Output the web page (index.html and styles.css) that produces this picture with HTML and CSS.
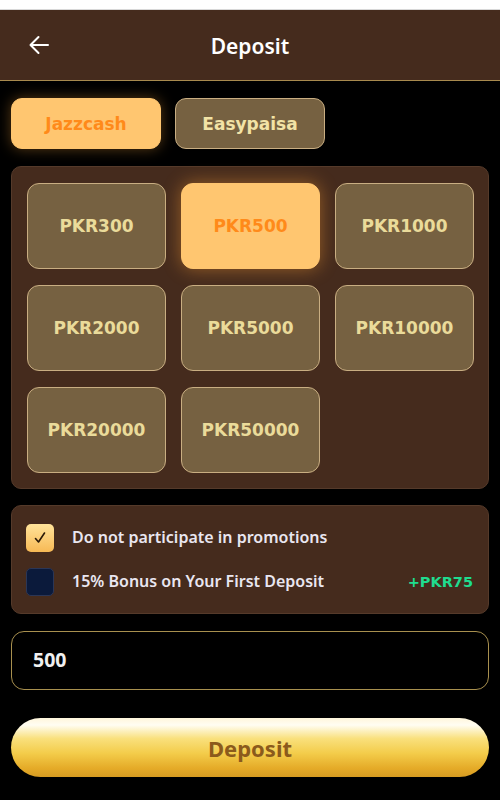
FILE: index.html
```html
<!DOCTYPE html>
<html>
<head>
<meta charset="utf-8">
<link rel="stylesheet" href="styles.css">
</head>
<body>
<div class="topstrip"></div>
<header class="header">
  <svg class="back" width="24" height="24" viewBox="0 0 24 24"><path d="M21 12H3.5M11.5 4L3.5 12L11.5 20" fill="none" stroke="#fff" stroke-width="2" stroke-linecap="round" stroke-linejoin="round"/></svg>
  <h1 class="title">Deposit</h1>
</header>
<main class="main">
  <div class="tabs">
    <div class="tab active">Jazzcash</div>
    <div class="tab">Easypaisa</div>
  </div>
  <div class="panel amounts">
    <div class="amt">PKR300</div>
    <div class="amt active">PKR500</div>
    <div class="amt">PKR1000</div>
    <div class="amt">PKR2000</div>
    <div class="amt">PKR5000</div>
    <div class="amt">PKR10000</div>
    <div class="amt">PKR20000</div>
    <div class="amt">PKR50000</div>
  </div>
  <div class="panel promos">
    <div class="promo">
      <span class="check on"><svg width="16" height="16" viewBox="0 0 16 16"><path d="M3.5 8.5L6.5 12L12.5 3" fill="none" stroke="#2a1a08" stroke-width="1.6" stroke-linecap="round" stroke-linejoin="round"/></svg></span>
      <span class="ptext">Do not participate in promotions</span>
    </div>
    <div class="promo">
      <span class="check off"></span>
      <span class="ptext">15% Bonus on Your First Deposit</span>
      <span class="bonus">+PKR75</span>
    </div>
  </div>
  <div class="input">500</div>
  <div class="submit">Deposit</div>
</main>
</body>
</html>
```
FILE: styles.css
```css
* { box-sizing: border-box; }
html, body { margin: 0; padding: 0; }
body {
  background: #000;
  font-family: "Noto Sans", "Open Sans", sans-serif;
  width: 500px;
  height: 800px;
  overflow: hidden;
}
.topstrip {
  height: 10px;
  background: #fff;
  border-bottom: 1px solid #d8d8d8;
}
.header {
  height: 71px;
  background: #452b1d;
  border-bottom: 1px solid #a88a4e;
  display: flex;
  align-items: center;
  justify-content: center;
  position: relative;
}
.back {
  position: absolute;
  left: 27px;
  top: 23px;
}
.title {
  margin: 0;
  color: #fff;
  font-size: 21px;
  font-weight: 600;
  padding-top: 1px;
}
.main {
  padding: 17px 11px 0;
  display: flex;
  flex-direction: column;
}
.tabs {
  display: flex;
  gap: 14px;
}
.tab {
  width: 150px;
  height: 51px;
  border-radius: 11px;
  border: 1px solid #c9ae82;
  background: #766141;
  color: #f2e3a6;
  font-family: "DejaVu Sans", sans-serif;
  font-weight: 700;
  font-size: 17px;
  display: flex;
  align-items: center;
  justify-content: center;
}
.tab.active {
  background: #ffc670;
  border-color: #ffc670;
  color: #ff8a1a;
  box-shadow: 0 0 14px rgba(255, 170, 60, 0.35);
}
.panel {
  background: #452b1d;
  border-radius: 10px;
  border: 1px solid #553a2a;
}
.amounts {
  margin-top: 17px;
  padding: 16px 15px 15px;
  display: grid;
  grid-template-columns: repeat(3, 139px);
  grid-auto-rows: 86px;
  gap: 16px 15px;
}
.amt {
  border-radius: 12px;
  border: 1px solid #c9ae82;
  background: #766141;
  color: #eadb9a;
  font-family: "DejaVu Sans", sans-serif;
  font-weight: 700;
  font-size: 17px;
  display: flex;
  align-items: center;
  justify-content: center;
  padding-bottom: 1px;
}
.amt.active {
  background: #ffc670;
  border-color: #ffc670;
  color: #ff8a1a;
  box-shadow: 0 0 18px rgba(255, 160, 50, 0.45);
}
.promos {
  margin-top: 16px;
  height: 109px;
  padding: 18px 15px 0 14px;
  display: flex;
  flex-direction: column;
  gap: 16px;
}
.promo {
  display: flex;
  align-items: center;
  height: 28px;
}
.check {
  width: 28px;
  height: 28px;
  border-radius: 5px;
  flex: none;
  display: flex;
  align-items: center;
  justify-content: center;
}
.check.on {
  background: linear-gradient(180deg, #ffe39a 0%, #f7b955 100%);
}
.check.off {
  background: #0b1a3b;
  border: 1px solid #2b3656;
}
.ptext {
  margin-left: 18px;
  color: #e9e6f0;
  font-size: 16px;
  font-weight: 600;
  flex: 1;
  padding-bottom: 2px;
}
.bonus {
  color: #1fdc8f;
  font-family: "DejaVu Sans", sans-serif;
  font-size: 14.5px;
  font-weight: 700;
}
.input {
  margin-top: 17px;
  height: 59px;
  border: 1px solid #a8904f;
  border-radius: 13px;
  padding: 0 21px;
  display: flex;
  align-items: center;
  color: #f0f0f0;
  font-size: 19.5px;
  font-weight: 700;
  padding-bottom: 2px;
}
.submit {
  margin-top: 28px;
  height: 59px;
  border-radius: 30px;
  background: linear-gradient(180deg, #fff6dc 0%, #fffdf2 12%, #f9e07c 35%, #f3cc4a 60%, #e5ab28 85%, #d69b22 100%);
  color: #8b5a1c;
  font-size: 22px;
  font-weight: 700;
  display: flex;
  align-items: center;
  justify-content: center;
  padding-top: 1px;
}
```
